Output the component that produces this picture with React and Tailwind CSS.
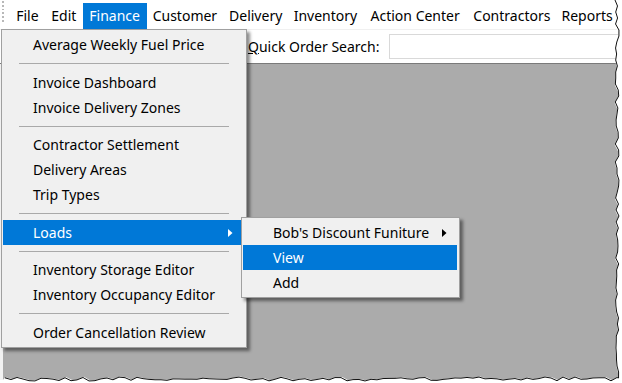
import React from "react";

const topMenu = [
  { label: "File", w: "w-[35px]" },
  { label: "Edit", w: "w-[38px]" },
  { label: "Finance", w: "w-[64px]", active: true },
  { label: "Customer", w: "w-[77px]" },
  { label: "Delivery", w: "w-[65px]" },
  { label: "Inventory", w: "w-[75px]" },
  { label: "Action Center", w: "w-[105px]" },
  { label: "Contractors", w: "w-[89px]" },
  { label: "Reports", w: "w-[62px]" },
];

const financeItems = [
  { label: "Average Weekly Fuel Price" },
  { sep: "h-[13px]" },
  { label: "Invoice Dashboard" },
  { label: "Invoice Delivery Zones" },
  { sep: "h-[12px]" },
  { label: "Contractor Settlement" },
  { label: "Delivery Areas" },
  { label: "Trip Types" },
  { sep: "h-[13px]" },
  { label: "Loads", active: true, sub: true },
  { sep: "h-[12px]" },
  { label: "Inventory Storage Editor" },
  { label: "Inventory Occupancy Editor" },
  { sep: "h-[13px]" },
  { label: "Order Cancellation Review" },
];

const loadsItems = [
  { label: "Bob's Discount Funiture", sub: true },
  { label: "View", active: true },
  { label: "Add" },
];

// jagged torn-paper edge along right and bottom
const rand = (i) => {
  const x = Math.sin(i * 12.9898) * 43758.5453;
  return x - Math.floor(x);
};
const rightPts = [];
for (let y = 0; y <= 378; y += 6) rightPts.push([615 + rand(y) * 4, y]);
const bottomPts = [];
for (let x = 617; x >= 0; x -= 6) bottomPts.push([x, 377 + rand(x + 500) * 4]);
const edge = [...rightPts, ...bottomPts];
const edgeLine = edge.map((p) => p.join(",")).join(" ");
const cover = `622,0 ${edgeLine} 0,383 622,383`;

const Arrow = ({ white }) => (
  <svg width="5" height="8" viewBox="0 0 5 8" className="ml-auto">
    <polygon points="0,0 4.5,4 0,8" fill={white ? "#ffffff" : "#000000"} />
  </svg>
);

const MenuItem = ({ item }) => {
  if (item.sep) {
    return (
      <div className={`${item.sep} flex items-center pl-[16px] pr-[14px]`}>
        <div className="h-px w-full bg-[#a9a9a9]" />
      </div>
    );
  }
  return (
    <div
      className={`h-[25px] flex items-center pl-[30px] pr-[10px] ${
        item.active ? "bg-[#0078d7] text-white" : "text-black"
      }`}
    >
      <span>{item.label}</span>
      {item.sub && <Arrow white={item.active} />}
    </div>
  );
};

export default function App() {
  return (
    <div className="relative w-[622px] h-[383px] bg-white overflow-hidden font-['Segoe_UI','Noto_Sans',sans-serif] text-[14px] leading-none">
      <div className="flex flex-col w-[618px] h-[380px]">
        {/* menu bar */}
        <div className="h-[30px] flex items-start pt-[3px] border-b border-[#f0f0f0] bg-white">
          <div className="w-[10px] h-[22px] -mt-[3px] flex flex-col gap-[2px] pl-[2px] pt-[1px]">
            {[0, 1, 2, 3, 4, 5].map((i) => (
              <div key={i} className="w-[2px] h-[2px] bg-[#b8b8b8]" />
            ))}
          </div>
          {topMenu.map((m) => (
            <div
              key={m.label}
              className={`${m.w} h-[26px] flex items-center justify-center ${
                m.active ? "bg-[#0078d7] text-white" : "text-black"
              }`}
            >
              {m.label}
            </div>
          ))}
        </div>

        {/* toolbar */}
        <div className="h-[34px] flex items-center bg-white border-b border-[#7a7a7a] pl-[248px]">
          <span className="text-black">
            <span className="underline">Q</span>uick Order Search:
          </span>
          <div className="ml-[10px] h-[25px] flex-1 border border-[#d9d9d9] border-r-0 bg-white" />
        </div>

        {/* mdi client area */}
        <div className="flex-1 bg-[#ababab] border-l-[3px] border-l-[#f2f2f2]" />
      </div>

      {/* Finance dropdown */}
      <div className="absolute left-[1px] top-[29px] w-[246px] bg-[#f0f0f0] border border-[#a0a0a0] pt-[2px] pb-[2px] pl-px pr-[3px] shadow-[3px_3px_3px_rgba(0,0,0,0.45)]">
        {financeItems.map((it, i) => (
          <MenuItem key={i} item={it} />
        ))}
      </div>

      {/* Loads submenu */}
      <div className="absolute left-[241px] top-[217px] w-[219px] bg-[#f0f0f0] border border-[#a0a0a0] pt-[2px] pb-[2px] pl-px pr-[2px] shadow-[3px_3px_3px_rgba(0,0,0,0.45)]">
        {loadsItems.map((it, i) => (
          <MenuItem key={i} item={it} />
        ))}
      </div>

      {/* torn edge */}
      <svg className="absolute inset-0" width="622" height="383" viewBox="0 0 622 383">
        <polygon points={cover} fill="#ffffff" />
        <polyline points={edgeLine} fill="none" stroke="#ffffff" strokeWidth="3" transform="translate(1,1)" />
        <polyline points={edgeLine} fill="none" stroke="#111111" strokeWidth="1" />
      </svg>
    </div>
  );
}
